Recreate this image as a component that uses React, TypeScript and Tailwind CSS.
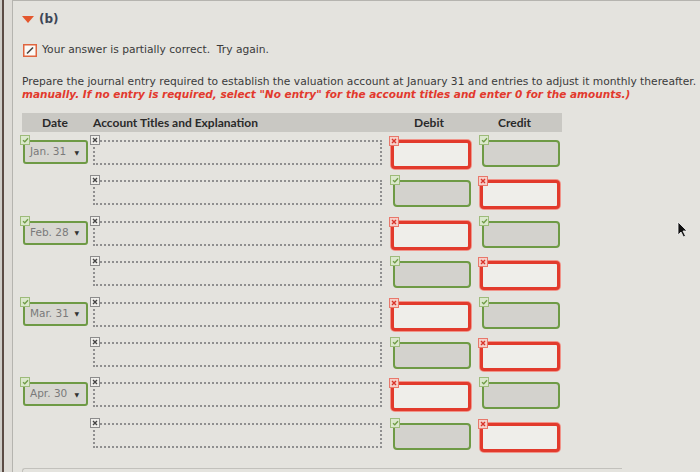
import React from 'react'

type Line = { debitOk: boolean; creditOk: boolean }
type Entry = { date: string; lines: Line[] }

const entries: Entry[] = [
  { date: 'Jan. 31', lines: [{ debitOk: false, creditOk: true }, { debitOk: true, creditOk: false }] },
  { date: 'Feb. 28', lines: [{ debitOk: false, creditOk: true }, { debitOk: true, creditOk: false }] },
  { date: 'Mar. 31', lines: [{ debitOk: false, creditOk: true }, { debitOk: true, creditOk: false }] },
  { date: 'Apr. 30', lines: [{ debitOk: false, creditOk: true }, { debitOk: true, creditOk: false }] },
]

function Badge({ kind }: { kind: 'ok' | 'bad' | 'none' }) {
  const box =
    kind === 'ok'
      ? 'bg-[#dbe8cc] border-[#9dbb7a]'
      : kind === 'bad'
      ? 'bg-[#f6cfc8] border-[#e8776a]'
      : 'bg-[#efeeea] border-[#8c8c8c]'
  return (
    <span className={`absolute -left-[5px] -top-[7px] z-10 flex h-[10px] w-[10px] items-center justify-center border ${box}`}>
      {kind === 'ok' ? (
        <svg width="7" height="6" viewBox="0 0 7 6">
          <path d="M1 3.2 L2.8 4.8 L6 1.2" fill="none" stroke="#6f9c47" strokeWidth="1.3" />
        </svg>
      ) : (
        <svg width="6" height="6" viewBox="0 0 6 6">
          <path d="M1 1 L5 5 M5 1 L1 5" stroke={kind === 'bad' ? '#d8332a' : '#444'} strokeWidth="1.4" />
        </svg>
      )}
    </span>
  )
}

function Amount({ ok }: { ok: boolean }) {
  return ok ? (
    <div className="relative h-[27px] w-[78px] rounded-[4px] border-2 border-[#6e9a45] bg-[#d3d2cd]">
      <Badge kind="ok" />
    </div>
  ) : (
    <div className="relative h-[29px] w-[80px] rounded-[4px] border-[3px] border-[#e23a2c] bg-[#efeeea] ring-1 ring-[#f0948a]">
      <Badge kind="bad" />
    </div>
  )
}

function Row({ date, line }: { date?: string; line: Line }) {
  return (
    <div className="flex h-[40.4px] items-start pt-[8px]">
      <div className="w-[71px] shrink-0 pl-[6px]">
        {date && (
          <div className="relative flex h-[24px] w-[65px] items-center justify-between rounded-[3px] border-2 border-[#6e9a45] bg-[#d8d7d2] pl-[5px] pr-[7px] text-[10.5px] text-[#7a7a7a]">
            <Badge kind="ok" />
            <span>{date}</span>
            <span className="text-[6px] text-[#333]">▼</span>
          </div>
        )}
      </div>
      <div className="shrink-0 pl-[5px]">
        <div className="relative h-[25px] w-[289px] border-2 border-dotted border-[#8f8f8f]">
          <Badge kind="none" />
        </div>
      </div>
      <div className="flex w-[89px] shrink-0 justify-end">
        <Amount ok={line.debitOk} />
      </div>
      <div className="flex w-[89px] shrink-0 justify-end">
        <Amount ok={line.creditOk} />
      </div>
    </div>
  )
}

export default function App() {
  return (
    <div className="relative flex h-[472px] w-[700px] overflow-hidden bg-[#d9d8d3] font-['DejaVu_Sans',sans-serif] text-[#3a3a3a]">
      <div className="w-[2px] shrink-0 bg-[#cfcdc8]" />
      <div className="w-[2px] shrink-0 bg-[#5b4b44]" />
      <div className="w-[8px] shrink-0 bg-[#dedcd7]" />
      <div className="min-w-0 flex-1 border-l border-t border-[#b5b4af] bg-[#e4e3de] pl-[9px]">
        <div className="mt-[11px] flex h-[14px] items-center gap-[5px]">
          <svg width="12" height="7" viewBox="0 0 12 7">
            <path d="M0 0 L12 0 L6 7 Z" fill="#e4572e" />
          </svg>
          <span className="text-[12px] font-bold text-[#3d4656]">(b)</span>
        </div>

        <div className="mt-[17px] flex h-[14px] items-center gap-[5px] pl-[1px]">
          <svg width="14" height="13" viewBox="0 0 14 13">
            <rect x="0.75" y="0.75" width="12.5" height="11.5" fill="#fbfaf7" stroke="#e0653f" strokeWidth="1.5" />
            <path d="M4 9.5 L10 3.5" stroke="#444" strokeWidth="1.6" />
          </svg>
          <span className="text-[10.7px]">Your answer is partially correct.&nbsp; Try again.</span>
        </div>

        <div className="mt-[19px] whitespace-nowrap text-[10.7px] leading-[12px]">
          Prepare the journal entry required to establish the valuation account at January 31 and entries to adjust it monthly thereafter.
        </div>
        <div className="whitespace-nowrap text-[10.5px] font-bold italic leading-[12px] text-[#e2392d]">
          manually. If no entry is required, select "No entry" for the account titles and enter 0 for the amounts.)
        </div>

        <div className="mt-[13px] w-[540px]">
          <div className="flex h-[19px] items-center bg-[#c9c8c3] font-['Lato',sans-serif] text-[12px] font-bold text-[#2a2a2a]">
            <div className="w-[66px] text-center">Date</div>
            <div className="w-[300px] pl-[5px]">Account Titles and Explanation</div>
            <div className="w-[82px] text-center">Debit</div>
            <div className="w-[89px] text-center">Credit</div>
          </div>
          <div className="-ml-[5px]">
            {entries.map((e) => (
              <React.Fragment key={e.date}>
                <Row date={e.date} line={e.lines[0]} />
                <Row line={e.lines[1]} />
              </React.Fragment>
            ))}
          </div>
        </div>

        <div className="mt-[13px] h-[20px] w-[600px] rounded-tl-[3px] border-l border-t border-[#c2c1bc]" />
      </div>

      <svg className="absolute left-[677px] top-[221px]" width="11" height="17" viewBox="0 0 11 17">
        <path d="M1 1 L1 14 L4 11 L6.5 16 L8.5 15 L6 10 L10 10 Z" fill="#111" stroke="#f4f4f4" strokeWidth="0.8" />
      </svg>
    </div>
  )
}
